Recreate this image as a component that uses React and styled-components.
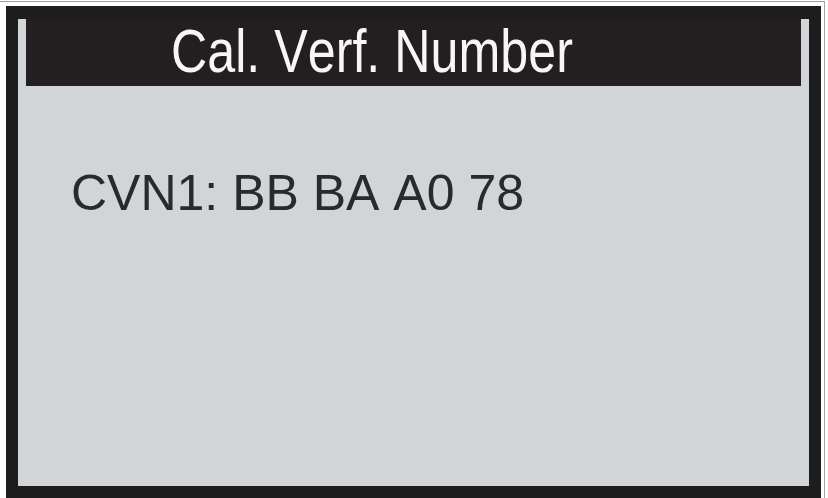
import React from "react";
import styled, { createGlobalStyle } from "styled-components";

const GlobalStyle = createGlobalStyle`
  html, body {
    margin: 0;
    padding: 0;
    background: #ffffff;
    overflow: hidden;
  }
`;

/* thin grey outline round the scanned picture */
const Outline = styled.div`
  width: 825px;
  height: 497px;
  margin-top: 1px;
  border-top: 1px solid #9c9c9c;
  border-right: 1px solid #a4a4a4;
  box-sizing: border-box;
  padding: 4px 3px 0 6px;
`;

const Frame = styled.div`
  background: #1e1d1e;
  padding: 13px 12px 12px 12px;
  height: 100%;
  box-sizing: border-box;
`;

const Screen = styled.div`
  background: #d2d5d8;
  height: 467px;
  display: flex;
  flex-direction: column;
  font-family: "Liberation Sans", Arial, sans-serif;
  font-kerning: none;
`;

const TitleBar = styled.div`
  background: #231f20;
  height: 67px;
  margin: 0 8px;
  padding-left: 145px;
`;

const Title = styled.h1`
  display: inline-block;
  margin: 0;
  font-size: 62px;
  font-weight: 400;
  line-height: 63px;
  color: #f6f6f4;
  white-space: nowrap;
  transform: scaleX(0.81);
  transform-origin: left center;
`;

const Row = styled.div`
  margin-top: 82px;
  padding-left: 53px;
  font-size: 50px;
  line-height: 50px;
  color: #2a2a2b;
  white-space: nowrap;
`;

export default function App() {
  return (
    <>
      <GlobalStyle />
      <Outline>
        <Frame>
          <Screen>
            <TitleBar>
              <Title>Cal. Verf. Number</Title>
            </TitleBar>
            <Row>CVN1: BB BA A0 78</Row>
          </Screen>
        </Frame>
      </Outline>
    </>
  );
}
